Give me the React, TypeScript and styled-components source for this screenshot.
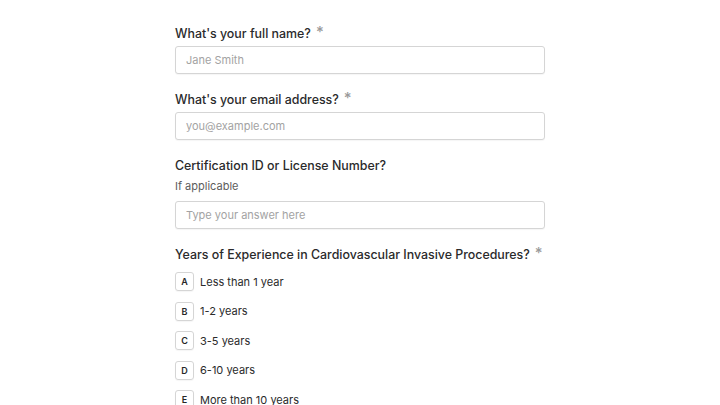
import styled, { createGlobalStyle } from "styled-components";

const GlobalStyle = createGlobalStyle`
  html, body {
    margin: 0;
    padding: 0;
    background: #ffffff;
  }
  body {
    font-family: Inter, "Noto Sans", "Liberation Sans", sans-serif;
    color: #262627;
  }
`;

const Page = styled.div`
  width: 720px;
  height: 405px;
  overflow: hidden;
  display: flex;
  justify-content: center;
`;

const Form = styled.form`
  width: 370px;
  padding-top: 24px;
  display: flex;
  flex-direction: column;
  gap: 16px;
`;

const Field = styled.div`
  display: flex;
  flex-direction: column;
`;

const Label = styled.label<{ $tight?: boolean }>`
  display: block;
  height: 20px;
  font-size: 12.4px;
  line-height: 20px;
  font-weight: 500;
  color: #2a2a2b;
  margin-bottom: ${(p) => (p.$tight ? 0 : 2)}px;
  white-space: nowrap;
`;

const Star = styled.span`
  display: inline-block;
  color: #9a9a9a;
  font-size: 15px;
  line-height: 0;
  margin-left: 5px;
  vertical-align: top;
  position: relative;
  top: 8px;
`;

const Hint = styled.div`
  font-size: 11px;
  line-height: 18px;
  color: #5c5c5c;
  margin: 1px 0 6px;
`;

const Input = styled.input`
  box-sizing: border-box;
  height: 28px;
  width: 100%;
  padding: 0 10px;
  border: 1px solid #d5d5d5;
  border-radius: 3px;
  box-shadow: 0 1px 1px rgba(0, 0, 0, 0.04);
  font-family: inherit;
  font-size: 11px;
  color: #262627;
  outline: none;
  &::placeholder {
    color: #a3a3a3;
  }
`;

const Options = styled.div`
  display: flex;
  flex-direction: column;
  gap: 10.6px;
  margin-top: 5px;
`;

const Option = styled.div`
  display: flex;
  align-items: center;
  gap: 6px;
  height: 19px;
  font-size: 11px;
  color: #2a2a2b;
`;

const Key = styled.span`
  box-sizing: border-box;
  width: 19px;
  height: 19px;
  border: 1px solid #d5d5d5;
  border-radius: 3px;
  display: flex;
  align-items: center;
  justify-content: center;
  font-size: 9px;
  font-weight: 600;
  color: #262627;
  box-shadow: 0 1px 1px rgba(0, 0, 0, 0.04);
`;

const years = [
  ["A", "Less than 1 year"],
  ["B", "1-2 years"],
  ["C", "3-5 years"],
  ["D", "6-10 years"],
  ["E", "More than 10 years"],
];

export default function App() {
  return (
    <Page>
      <GlobalStyle />
      <Form onSubmit={(e) => e.preventDefault()}>
        <Field>
          <Label>
            What's your full name?<Star>*</Star>
          </Label>
          <Input placeholder="Jane Smith" />
        </Field>
        <Field>
          <Label>
            What's your email address?<Star>*</Star>
          </Label>
          <Input placeholder="you@example.com" />
        </Field>
        <Field>
          <Label $tight>Certification ID or License Number?</Label>
          <Hint>If applicable</Hint>
          <Input placeholder="Type your answer here" />
        </Field>
        <Field>
          <Label>
            Years of Experience in Cardiovascular Invasive Procedures?<Star>*</Star>
          </Label>
          <Options>
            {years.map(([k, t]) => (
              <Option key={k}>
                <Key>{k}</Key>
                {t}
              </Option>
            ))}
          </Options>
        </Field>
      </Form>
    </Page>
  );
}
